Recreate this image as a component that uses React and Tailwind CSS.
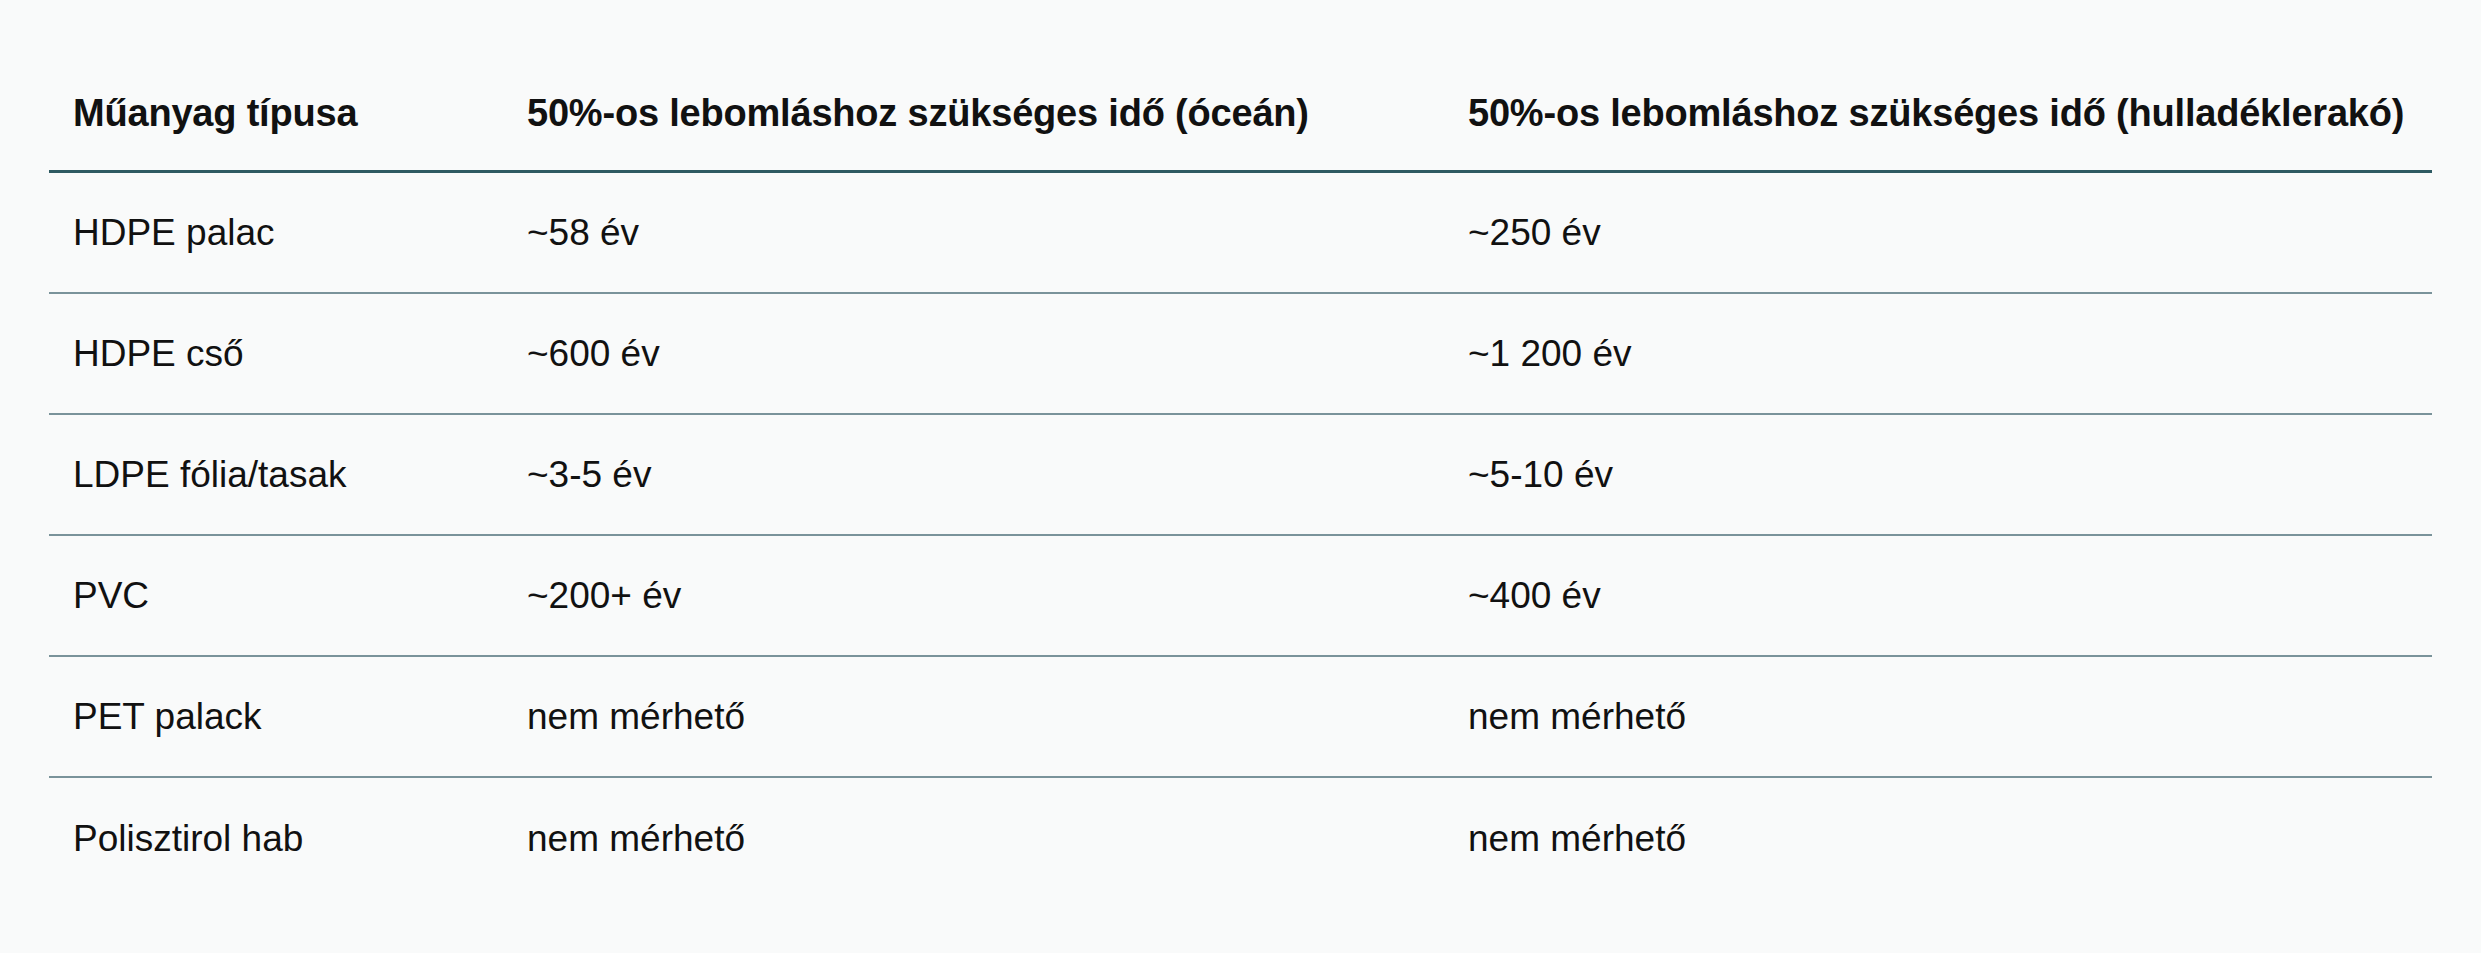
const rows = [
  ['HDPE palac', '~58 év', '~250 év'],
  ['HDPE cső', '~600 év', '~1 200 év'],
  ['LDPE fólia/tasak', '~3-5 év', '~5-10 év'],
  ['PVC', '~200+ év', '~400 év'],
  ['PET palack', 'nem mérhető', 'nem mérhető'],
  ['Polisztirol hab', 'nem mérhető', 'nem mérhető'],
]

export default function App() {
  return (
    <div className="min-h-screen bg-[#f9fafa] px-[49px] pt-[57px] font-['Liberation_Sans',Arial,sans-serif] text-[#111111]">
      {/* Header */}
      <div className="grid grid-cols-[454px_941px_1fr] h-[116px] items-center border-b-[3px] border-[#2e5a62] text-[38px] font-bold tracking-[-0.2px]">
        <div className="pl-6">Műanyag típusa</div>
        <div className="pl-6">50%-os lebomláshoz szükséges idő (óceán)</div>
        <div className="pl-6">50%-os lebomláshoz szükséges idő (hulladéklerakó)</div>
      </div>

      {/* Body */}
      {rows.map((r, i) => (
        <div
          key={r[0]}
          className={`grid grid-cols-[454px_941px_1fr] h-[121px] items-center text-[37px] ${
            i < rows.length - 1 ? 'border-b-2 border-[#7a939a]' : ''
          }`}
        >
          <div className="pl-6">{r[0]}</div>
          <div className="pl-6">{r[1]}</div>
          <div className="pl-6">{r[2]}</div>
        </div>
      ))}
    </div>
  )
}
